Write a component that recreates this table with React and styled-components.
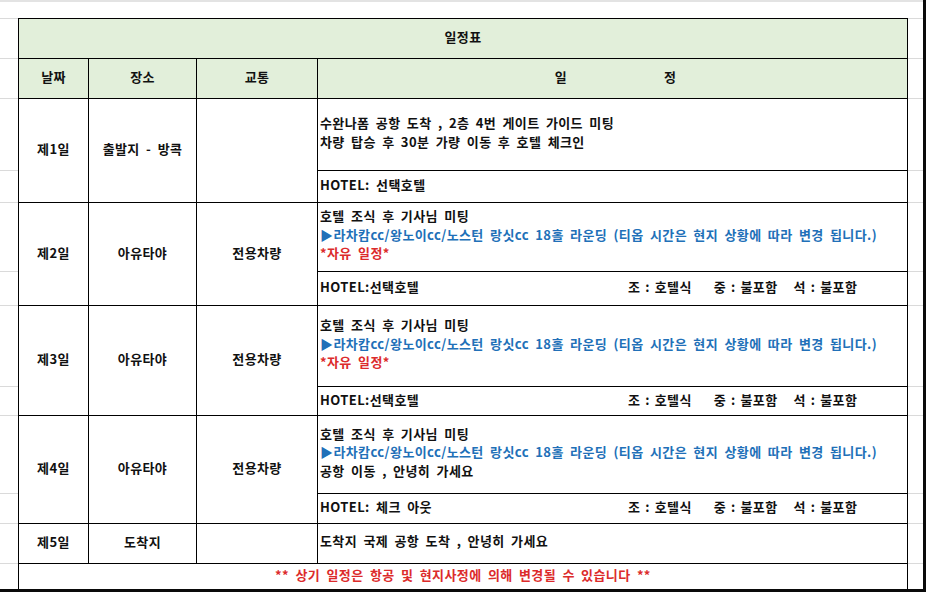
import React from 'react';
import styled, { createGlobalStyle } from 'styled-components';

const GlobalStyle = createGlobalStyle`
	html, body {
		margin: 0;
		padding: 0;
		background: #ffffff;
	}
	body {
		font-family: 'Noto Sans CJK KR', 'Noto Sans', sans-serif;
	}
`;

// track heights, top margin first, frame line last
const rowTracks = [18, 40, 40, 72, 32, 69, 34, 81, 29, 78, 30, 40, 26, 3];

const days = [
	{
		day: '제1일',
		place: '출발지 - 방콕',
		transport: '',
		lines: [
			{ text: '수완나폼 공항 도착 , 2층 4번 게이트 가이드 미팅' },
			{ text: '차량 탑승 후 30분 가량 이동 후 호텔 체크인' },
		],
		hotel: 'HOTEL: 선택호텔',
		meals: false,
	},
	{
		day: '제2일',
		place: '아유타야',
		transport: '전용차량',
		lines: [
			{ text: '호텔 조식 후 기사님 미팅' },
			{
				text: '▶라차캄cc/왕노이cc/노스턴 랑싯cc 18홀 라운딩 (티옵 시간은 현지 상황에 따라 변경 됩니다.)',
				tone: 'blue',
			},
			{ text: '*자유 일정*', tone: 'red' },
		],
		hotel: 'HOTEL:선택호텔',
		meals: true,
	},
	{
		day: '제3일',
		place: '아유타야',
		transport: '전용차량',
		lines: [
			{ text: '호텔 조식 후 기사님 미팅' },
			{
				text: '▶라차캄cc/왕노이cc/노스턴 랑싯cc 18홀 라운딩 (티옵 시간은 현지 상황에 따라 변경 됩니다.)',
				tone: 'blue',
			},
			{ text: '*자유 일정*', tone: 'red' },
		],
		hotel: 'HOTEL:선택호텔',
		meals: true,
	},
	{
		day: '제4일',
		place: '아유타야',
		transport: '전용차량',
		lines: [
			{ text: '호텔 조식 후 기사님 미팅' },
			{
				text: '▶라차캄cc/왕노이cc/노스턴 랑싯cc 18홀 라운딩 (티옵 시간은 현지 상황에 따라 변경 됩니다.)',
				tone: 'blue',
			},
			{ text: '공항 이동 , 안녕히 가세요' },
		],
		hotel: 'HOTEL: 체크 아웃',
		meals: true,
	},
];

const tones = {
	black: '#111111',
	blue: '#2170b8',
	red: '#dc2b2b',
};

const App = () => {
	const lastRow = rowTracks.length;
	// margin gridlines for every table row (rows 2..13)
	const gridRows = [];
	for (let r = 2; r < lastRow; r++) gridRows.push(r);

	return (
		<>
			<GlobalStyle />
			<Sheet>
				<TopStrip />
				{gridRows.map((r) => (
					<MarginCell key={'l' + r} $row={r} $col={1} />
				))}
				{gridRows.map((r) => (
					<MarginCell key={'r' + r} $row={r} $col={6} />
				))}
				<FrameRight />
				<FrameBottom />

				<TitleCell>일정표</TitleCell>

				<HeadCell $col={2}>날짜</HeadCell>
				<HeadCell $col={3}>장소</HeadCell>
				<HeadCell $col={4}>교통</HeadCell>
				<HeadCell $col={5} $last>
					<HeadWord>일</HeadWord>
					<HeadWord>정</HeadWord>
				</HeadCell>

				{days.map((d, i) => {
					const row = 4 + i * 2;
					return (
						<React.Fragment key={d.day}>
							<Cell $row={row} $span={2} $col={2}>
								{d.day}
							</Cell>
							<Cell $row={row} $span={2} $col={3}>
								{d.place}
							</Cell>
							<Cell $row={row} $span={2} $col={4}>
								{d.transport}
							</Cell>
							<ScheduleCell $row={row}>
								{d.lines.map((l, j) => (
									<Line key={j} $tone={l.tone}>
										{l.text}
									</Line>
								))}
							</ScheduleCell>
							<HotelCell $row={row + 1}>
								<HotelName>{d.hotel}</HotelName>
								{d.meals && (
									<>
										<Meal $gap={22}>조 : 호텔식</Meal>
										<Meal $gap={16}>중 : 불포함</Meal>
										<Meal $gap={0}>석 : 불포함</Meal>
									</>
								)}
							</HotelCell>
						</React.Fragment>
					);
				})}

				<Cell $row={12} $col={2}>
					제5일
				</Cell>
				<Cell $row={12} $col={3}>
					도착지
				</Cell>
				<Cell $row={12} $col={4}></Cell>
				<ScheduleCell $row={12}>
					<Line>도착지 국제 공항 도착 , 안녕히 가세요</Line>
				</ScheduleCell>

				<FooterCell>
					** 상기 일정은 항공 및 현지사정에 의해 변경될 수 있습니다 **
				</FooterCell>
			</Sheet>
		</>
	);
};

export default App;

//--------CSS----------//
const Sheet = styled.div`
	display: grid;
	width: 926px;
	height: 592px;
	grid-template-columns: 18px 70px 108px 121px 591px 15px 3px;
	grid-template-rows: ${rowTracks.map((h) => h + 'px').join(' ')};
	font-size: 13px;
	font-weight: 700;
	letter-spacing: 0.4px;
	word-spacing: 3px;
	color: #111111;
	overflow: hidden;
`;

const TopStrip = styled.div`
	grid-row: 1;
	grid-column: 1 / 7;
	border-top: 2px solid #e3e3e3;
`;

const MarginCell = styled.div`
	grid-row: ${(p) => p.$row};
	grid-column: ${(p) => p.$col};
	border-top: 1px solid #dadada;
`;

const FrameRight = styled.div`
	grid-row: 1 / -1;
	grid-column: 7;
	background: #0a0a0a;
`;

const FrameBottom = styled.div`
	grid-row: 14;
	grid-column: 1 / 7;
	background: #0a0a0a;
`;

const BaseCell = styled.div`
	box-sizing: border-box;
	border-top: 1px solid #000;
	border-left: 1px solid #000;
	display: flex;
	align-items: center;
	min-width: 0;
	padding-bottom: 4px;
	white-space: nowrap;
	overflow: hidden;
`;

const TitleCell = styled(BaseCell)`
	grid-row: 2;
	grid-column: 2 / 6;
	border-right: 1px solid #000;
	background: #e2efda;
	justify-content: center;
`;

const HeadCell = styled(BaseCell)`
	grid-row: 3;
	grid-column: ${(p) => p.$col};
	background: #e2efda;
	justify-content: center;
	border-right: ${(p) => (p.$last ? '1px solid #000' : 'none')};
	padding-left: ${(p) => (p.$last ? '6px' : '0')};
	gap: 97px;
`;

const HeadWord = styled.span``;

const Cell = styled(BaseCell)`
	grid-row: ${(p) => p.$row} / span ${(p) => p.$span || 1};
	grid-column: ${(p) => p.$col};
	justify-content: center;
`;

const ScheduleCell = styled(BaseCell)`
	grid-row: ${(p) => p.$row};
	grid-column: 5;
	border-right: 1px solid #000;
	flex-direction: column;
	align-items: flex-start;
	justify-content: center;
	padding-left: 2px;
`;

const Line = styled.div`
	line-height: 18.5px;
	color: ${(p) => tones[p.$tone || 'black']};
`;

const HotelCell = styled(BaseCell)`
	grid-row: ${(p) => p.$row};
	grid-column: 5;
	border-right: 1px solid #000;
	padding-left: 2px;
`;

const HotelName = styled.span`
	flex: 0 0 308px;
`;

const Meal = styled.span`
	word-spacing: 1.5px;
	margin-right: ${(p) => p.$gap}px;
`;

const FooterCell = styled(BaseCell)`
	grid-row: 13;
	grid-column: 2 / 6;
	border-right: 1px solid #000;
	justify-content: center;
	color: #dc2b2b;
`;
